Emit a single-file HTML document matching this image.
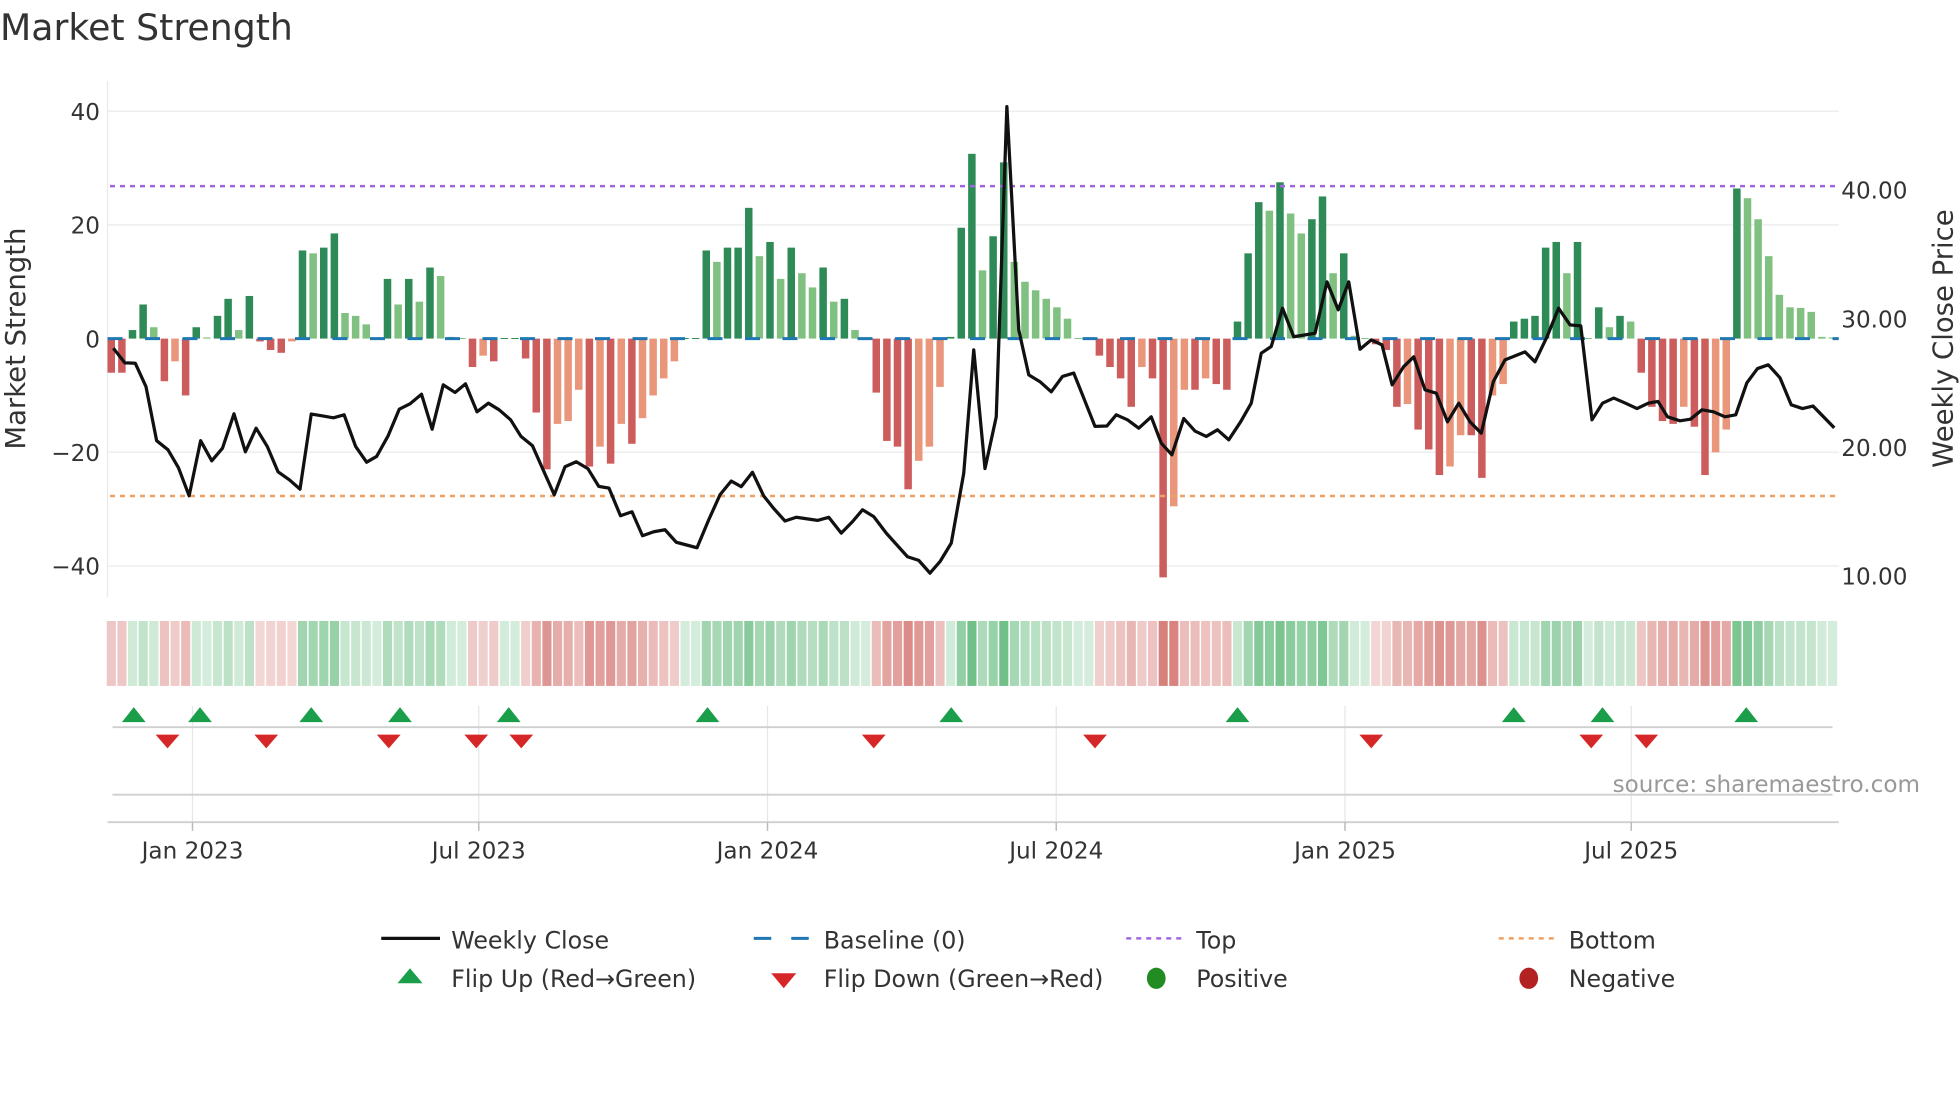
<!DOCTYPE html>
<html><head><meta charset="utf-8"><style>
html,body{margin:0;padding:0;background:#fff;}
svg{display:block;}
text{font-family:"DejaVu Sans","Liberation Sans",sans-serif;fill:#333;}
</style></head><body>
<svg id="s" width="1960" height="1102" viewBox="0 0 1568 882" preserveAspectRatio="none" xmlns="http://www.w3.org/2000/svg">
<rect width="1568" height="882" fill="#fff"/>
<text x="0" y="32" font-size="29">Market Strength</text>
<line x1="86" y1="65" x2="86" y2="478" stroke="#eaeaea"/>
<g stroke="#eceef0" stroke-width="1.2">
<line x1="86" y1="89" x2="1471" y2="89"/><line x1="86" y1="180" x2="1471" y2="180"/>
<line x1="86" y1="362" x2="1471" y2="362"/><line x1="86" y1="453" x2="1471" y2="453"/>
</g>
<g font-size="18.5" text-anchor="end">
<text x="80" y="96">40</text><text x="80" y="187">20</text><text x="80" y="278">0</text>
<text x="80" y="369">−20</text><text x="80" y="460">−40</text>
</g>
<g font-size="18.5">
<text x="1473" y="159">40.00</text><text x="1473" y="262">30.00</text>
<text x="1473" y="365">20.00</text><text x="1473" y="468">10.00</text>
</g>
<text transform="translate(20,271) rotate(-90)" font-size="22" text-anchor="middle">Market Strength</text>
<text transform="translate(1562,271) rotate(-90)" font-size="22" text-anchor="middle">Weekly Close Price</text>
<g id="bars"></g>
<line x1="86" y1="271" x2="1471" y2="271" stroke="#1f77b4" stroke-width="2.4" stroke-dasharray="12 18"/>
<line x1="88" y1="149" x2="1468" y2="149" stroke="#a066dd" stroke-width="2" stroke-dasharray="4 4"/>
<line x1="88" y1="397" x2="1468" y2="397" stroke="#f0a060" stroke-width="2" stroke-dasharray="4 4"/>
<polyline id="price" fill="none" stroke="#111" stroke-width="2.6" stroke-linejoin="round"/>
<g id="strip"></g>
<g stroke="#e4e7ee" stroke-width="1">
<line x1="154" y1="565" x2="154" y2="658"/><line x1="383" y1="565" x2="383" y2="658"/>
<line x1="614" y1="565" x2="614" y2="658"/><line x1="845" y1="565" x2="845" y2="658"/>
<line x1="1076" y1="565" x2="1076" y2="658"/><line x1="1305" y1="565" x2="1305" y2="658"/>
</g>
<line x1="90" y1="582" x2="1466" y2="582" stroke="#cfcfcf" stroke-width="1.5"/>
<line x1="90" y1="636" x2="1466" y2="636" stroke="#cfcfcf" stroke-width="1.5"/>
<line x1="86" y1="658" x2="1471" y2="658" stroke="#cfcfcf" stroke-width="1.5"/>
<g stroke="#bbb" stroke-width="1.2">
<line x1="154" y1="658" x2="154" y2="665"/><line x1="383" y1="658" x2="383" y2="665"/>
<line x1="614" y1="658" x2="614" y2="665"/><line x1="845" y1="658" x2="845" y2="665"/>
<line x1="1076" y1="658" x2="1076" y2="665"/><line x1="1305" y1="658" x2="1305" y2="665"/>
</g>
<g id="tri"></g>
<text x="1536" y="634" font-size="18.5" text-anchor="end" style="fill:#999">source: sharemaestro.com</text>
<g font-size="18.5" text-anchor="middle">
<text x="154" y="687">Jan 2023</text><text x="383" y="687">Jul 2023</text>
<text x="614" y="687">Jan 2024</text><text x="845" y="687">Jul 2024</text>
<text x="1076" y="687">Jan 2025</text><text x="1305" y="687">Jul 2025</text>
</g>
<g font-size="19">
<line x1="305" y1="751" x2="352" y2="751" stroke="#111" stroke-width="2.6"/>
<text x="361" y="759">Weekly Close</text>
<line x1="603" y1="751" x2="617" y2="751" stroke="#1f77b4" stroke-width="2.4"/>
<line x1="633" y1="751" x2="647" y2="751" stroke="#1f77b4" stroke-width="2.4"/>
<text x="659" y="759">Baseline (0)</text>
<line x1="901" y1="751" x2="947" y2="751" stroke="#a066dd" stroke-width="2" stroke-dasharray="4 4"/>
<text x="957" y="759">Top</text>
<line x1="1199" y1="751" x2="1245" y2="751" stroke="#f0a060" stroke-width="2" stroke-dasharray="4 4"/>
<text x="1255" y="759">Bottom</text>
<polygon points="328,775 338,787 318,787" fill="#1a9e4a"/>
<text x="361" y="790">Flip Up (Red→Green)</text>
<polygon points="617,779 637,779 627,791" fill="#d62728"/>
<text x="659" y="790">Flip Down (Green→Red)</text>
<ellipse cx="925" cy="783" rx="7.5" ry="8.5" fill="#228b22"/>
<text x="957" y="790">Positive</text>
<ellipse cx="1223" cy="783" rx="7.5" ry="8.5" fill="#b22222"/>
<text x="1255" y="790">Negative</text>
</g>
</svg>
<script>
var V=[-6,-6,1.5,6,2,-7.5,-4,-10,2,0.2,4,7,1.5,7.5,-0.5,-2,-2.5,-0.5,15.5,15,16,18.5,4.5,4,2.5,0.2,10.5,6,10.5,6.5,12.5,11,0.3,0.1,-5,-3,-4,0.1,0.1,-3.5,-13,-23,-15,-14.5,-9,-22.5,-19,-22,-15,-18.5,-14,-10,-7,-4,0.1,0.1,15.5,13.5,16,16,23,14.5,17,10.5,16,11.5,9,12.5,6.5,7,1.5,0.1,-9.5,-18,-19,-26.5,-21.5,-19,-8.5,0.3,19.5,32.5,12,18,31,13.5,10,8.5,7,5.5,3.5,0.1,0.1,-3,-5,-7,-12,-5,-7,-42,-29.5,-9,-9,-7,-8,-9,3,15,24,22.5,27.5,22,18.5,21,25,11.5,15,0.5,0.1,-1,-2,-12,-11.5,-16,-19.5,-24,-22.5,-17,-17,-24.5,-10,-8,3,3.5,4,16,17,11.5,17,0.1,5.5,2,4,3,-6,-12,-14.5,-15,-12,-15.5,-24,-20,-16,26.4,24.7,21,14.5,7.7,5.5,5.4,4.7,0.3,0.2];
var NS="http://www.w3.org/2000/svg";
function el(p,t,a){var e=document.createElementNS(NS,t);for(var k in a)e.setAttribute(k,a[k]);p.appendChild(e);return e;}
var bars=document.getElementById('bars'),strip=document.getElementById('strip');
var x0=89,step=8.5;
for(var i=0;i<V.length;i++){
 var v=V[i],p=i?V[i-1]:0,x=x0+i*step,c;
 if(v>=0)c=(v>=p)?'#2e8b57':'#80c080';else c=(v<=p)?'#cd5c5c':'#e9967a';
 var h=Math.abs(v)*4.55;
 el(bars,'rect',{x:x-3,y:v>=0?271-h:271,width:6,height:Math.max(h,0.8),fill:c});
 var a=0.22+0.5*Math.min(Math.abs(v)/30,1);
 el(strip,'rect',{x:x-3.6,y:497,width:7.3,height:52,fill:v>=0?'#3aa85a':'#c8504a','fill-opacity':a.toFixed(2)});
}
var P=[[90.7,278.7],[99.9,290.4],[108.2,290.7],[116.8,309.5],[125.3,352.7],[134.4,360],[142.8,374.4],[151.3,396.8],[160.5,352.7],[169.4,368.8],[178,358.7],[187.2,331.2],[196.3,361.6],[204.9,342.7],[213.8,357.3],[222.4,377.6],[231.5,384],[240,391.5],[249,331.4],[257.6,332.8],[266.7,334.4],[275.3,332],[284.5,357.3],[293.3,369.9],[301.3,365.3],[310.5,348.8],[319.4,327.5],[328,323.2],[337.2,315.5],[345.7,343.5],[354.6,308],[364,314.1],[372.4,307.2],[381.6,329.6],[390.7,322.7],[399.3,328],[408.5,336],[416.8,349.3],[426,356.8],[434.5,376],[443.4,396],[452,373.6],[461,369.6],[470.4,375.2],[479,389.3],[487.2,390.7],[496.4,412.8],[505.6,409.6],[514,428.8],[523,425.6],[532,424],[541,434],[557.6,438.4],[567,416],[576,396],[585,385],[593,389.5],[602,378],[611,397],[619,407],[628,417],[637,414],[654,416.5],[663,414],[673,426.7],[682,417.5],[690,408],[699,413.5],[709,426.7],[726,445.6],[735,448.5],[744,458.7],[752,449.5],[761,434.7],[771,378.7],[779,280],[788,375],[797,333.6],[805.5,85.3],[815,264],[823,300],[832,305.5],[841,313.6],[850,301.3],[859,298.6],[867,318.6],[876,341.3],[885.5,341],[893,332],[902,336],[911,342.7],[921,333.6],[929,354.7],[937.5,364],[947,335],[956,345],[965,349.3],[974,344],[983,352],[992.5,337.6],[1001,322.7],[1009,282.7],[1017,277.3],[1026,246.7],[1035,269.5],[1052,266.7],[1061.6,225.6],[1070.6,248],[1079,225.6],[1088,279.5],[1097,272],[1105.6,276],[1113.7,308],[1122.8,293.6],[1131,285.6],[1140,312],[1149,314.7],[1158,337.6],[1167,322.7],[1176,337.6],[1185,346.7],[1194.6,305.6],[1204,288],[1220,281.6],[1228,289.6],[1237.6,269.6],[1246.8,246.7],[1256,260],[1264.6,260.8],[1273.6,336],[1282,322.7],[1291,318.6],[1300.4,322.7],[1309.6,327],[1318.6,322.7],[1326.4,321.3],[1334,333.6],[1344,336.8],[1352.4,335.5],[1361.6,328],[1370.8,329.6],[1380,333.6],[1388.6,332],[1397.5,306.4],[1406,295],[1414.6,292],[1424,302.4],[1433,324],[1442,327],[1450.4,325],[1459.6,334.4],[1467.4,342.4]];
document.getElementById('price').setAttribute('points',P.map(function(q){return q.join(',')}).join(' '));
var tri=document.getElementById('tri');
[107,160,249,320,407,566,761,990,1211,1282,1397].forEach(function(x){el(tri,'polygon',{points:(x)+',566 '+(x+9.5)+',578 '+(x-9.5)+',578',fill:'#1a9e4a'});});
[134,213,311,381,417,699,876,1097,1273,1317].forEach(function(x){el(tri,'polygon',{points:(x-9.5)+',588 '+(x+9.5)+',588 '+x+',599',fill:'#d62728'});});
</script>
</body></html>
